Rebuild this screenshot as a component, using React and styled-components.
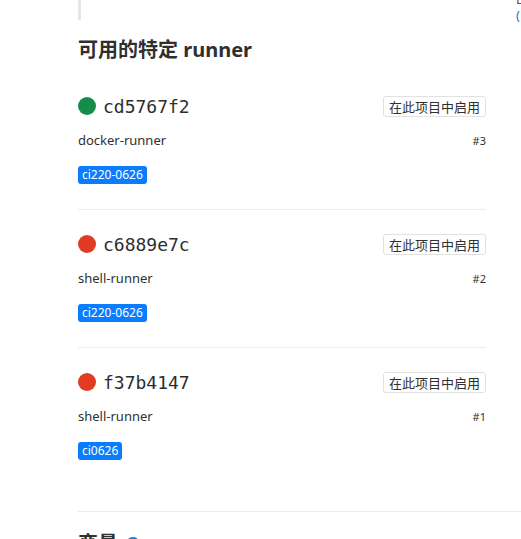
import React from "react";
import styled, { createGlobalStyle } from "styled-components";

const GlobalStyle = createGlobalStyle`
  html, body {
    margin: 0;
    padding: 0;
    background: #fff;
  }
  body {
    font-family: "Noto Sans", "Noto Sans CJK SC", sans-serif;
    color: #303030;
  }
`;

const Page = styled.div`
  width: 521px;
  height: 539px;
  overflow: hidden;
  padding-left: 78px;
  box-sizing: border-box;
`;

const Columns = styled.div`
  display: flex;
  gap: 30px;
`;

const Main = styled.div`
  width: 408px;
  flex-shrink: 0;
`;

const Aside = styled.div`
  display: flex;
  flex-direction: column;
  font-size: 13px;
  line-height: 16px;
  margin-top: -9px;
  white-space: nowrap;
`;

const AsideText = styled.span`
  color: ${props => props.color};
`;

const Quote = styled.div`
  height: 20px;
  border-left: 3px solid #e5e5e5;
`;

const Heading = styled.h4`
  margin: 16px 0 8px;
  font-size: 20px;
  line-height: 28px;
  font-weight: 700;
  color: #303030;
  display: flex;
  align-items: center;
  gap: 8px;
`;

const Runner = styled.div`
  padding: 23px 0 25px;
  border-bottom: ${props => (props.last ? "none" : "1px solid #ececec")};
`;

const HeaderRow = styled.div`
  display: flex;
  align-items: center;
  justify-content: space-between;
  height: 22px;
`;

const Title = styled.div`
  display: flex;
  align-items: center;
  gap: 7px;
`;

const Status = styled.span`
  width: 18px;
  height: 18px;
  border-radius: 50%;
  background: ${props => (props.online ? "#168c4b" : "#e03b23")};
`;

const Token = styled.span`
  font-family: "DejaVu Sans Mono", monospace;
  font-size: 18px;
  color: #2e2e2e;
`;

const EnableButton = styled.button`
  height: 21px;
  padding: 0 5px;
  background: #fff;
  border: 1px solid #e1e1e1;
  border-radius: 3px;
  font-family: "Noto Sans CJK SC", sans-serif;
  font-size: 13px;
  color: #303030;
  line-height: 19px;
`;

const InfoRow = styled.div`
  display: flex;
  justify-content: space-between;
  align-items: center;
  margin-top: 13px;
  height: 20px;
  font-size: 13px;
`;

const RunnerId = styled.span`
  font-size: 11px;
  color: #303030;
`;

const Tags = styled.div`
  display: flex;
  gap: 4px;
  margin-top: 16px;
`;

const Tag = styled.span`
  height: 18px;
  padding: 0 4px;
  background: #0a7cfe;
  color: #fff;
  border-radius: 3px;
  font-size: 12px;
  line-height: 18px;
`;

const Divider = styled.hr`
  margin: 26px 0 18px;
  border: none;
  border-top: 1px solid #ececec;
`;

const HelpIcon = styled.span`
  width: 14px;
  height: 14px;
  border-radius: 50%;
  background: #1f75cb;
`;

const runners = [
  { token: "cd5767f2", name: "docker-runner", id: 3, online: true, tags: ["ci220-0626"] },
  { token: "c6889e7c", name: "shell-runner", id: 2, online: false, tags: ["ci220-0626"] },
  { token: "f37b4147", name: "shell-runner", id: 1, online: false, tags: ["ci0626"] },
];

export default function App() {
  return (
    <>
      <GlobalStyle />
      <Page>
        <Columns>
          <Main>
            <Quote />
            <Heading>可用的特定 runner</Heading>
            {runners.map((r, i) => (
              <Runner key={r.token} last={i === runners.length - 1}>
                <HeaderRow>
                  <Title>
                    <Status online={r.online} />
                    <Token>{r.token}</Token>
                  </Title>
                  <EnableButton>在此项目中启用</EnableButton>
                </HeaderRow>
                <InfoRow>
                  <span>{r.name}</span>
                  <RunnerId>#{r.id}</RunnerId>
                </InfoRow>
                <Tags>
                  {r.tags.map(t => (
                    <Tag key={t}>{t}</Tag>
                  ))}
                </Tags>
              </Runner>
            ))}
          </Main>
          <Aside>
            <AsideText color="#7a4a12">L</AsideText>
            <AsideText color="#1f75cb">(</AsideText>
          </Aside>
        </Columns>
        <Divider />
        <Heading>
          变量
          <HelpIcon />
        </Heading>
      </Page>
    </>
  );
}
